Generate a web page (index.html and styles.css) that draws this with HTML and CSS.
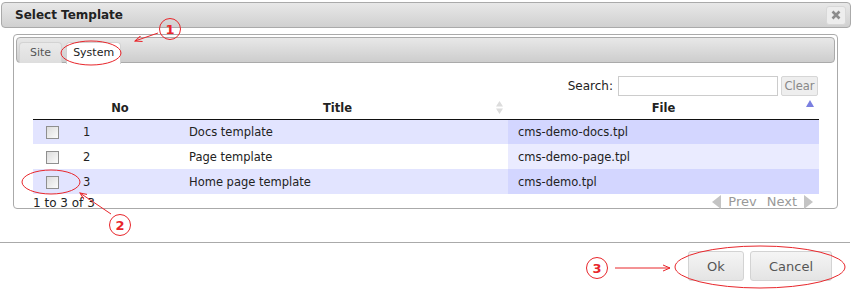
FILE: index.html
```html
<!DOCTYPE html>
<html lang="en">
<head>
    <meta charset="UTF-8">
    <title>Select Template</title>
    <link rel="stylesheet" href="styles.css">
</head>
<body>
    <div class="dialog">
        <div class="titlebar">
            <span class="title">Select Template</span>
            <button class="close-btn" title="Close">
                <svg width="10" height="10" viewBox="0 0 10 10"><path d="M1.5 1.5 L8.5 8.5 M8.5 1.5 L1.5 8.5" stroke="#8c8c8c" stroke-width="2.6"/></svg>
            </button>
        </div>

        <div class="content">
            <div class="tabs">
                <ul class="tab-nav">
                    <li class="tab">Site</li>
                    <li class="tab active">System</li>
                </ul>
                <div class="tab-panel">
                    <div class="search-row">
                        <label>Search:</label>
                        <input type="text" class="search-input">
                        <button class="clear-btn">Clear</button>
                    </div>
                    <table class="grid">
                        <thead>
                            <tr>
                                <th class="col-check"></th>
                                <th class="col-no">No</th>
                                <th class="col-title">Title
                                    <svg class="sort-icon" width="9" height="15" viewBox="0 0 9 15"><path d="M4.5 1 L8 6.5 H1 Z M4.5 14 L8 8.5 H1 Z" fill="#dcdcdc"/></svg>
                                </th>
                                <th class="col-file">File
                                    <svg class="sort-icon up" width="10" height="9" viewBox="0 0 10 9"><path d="M5 1 L9 8 H1 Z" fill="#7a7fe0"/></svg>
                                </th>
                            </tr>
                        </thead>
                        <tbody>
                            <tr class="odd">
                                <td><span class="checkbox"></span></td>
                                <td>1</td>
                                <td>Docs template</td>
                                <td class="sorted">cms-demo-docs.tpl</td>
                            </tr>
                            <tr class="even">
                                <td><span class="checkbox"></span></td>
                                <td>2</td>
                                <td>Page template</td>
                                <td class="sorted">cms-demo-page.tpl</td>
                            </tr>
                            <tr class="odd">
                                <td><span class="checkbox"></span></td>
                                <td>3</td>
                                <td>Home page template</td>
                                <td class="sorted">cms-demo.tpl</td>
                            </tr>
                        </tbody>
                    </table>
                    <div class="grid-footer">
                        <span class="info">1 to 3 of 3</span>
                        <span class="paginate">
                            <svg width="11" height="14" viewBox="0 0 11 14"><path d="M10 0 L1 7 L10 14 Z" fill="#c4c4c4"/></svg>
                            <span class="page-link">Prev</span>
                            <span class="page-link">Next</span>
                            <svg width="11" height="14" viewBox="0 0 11 14"><path d="M1 0 L10 7 L1 14 Z" fill="#c4c4c4"/></svg>
                        </span>
                    </div>
                </div>
            </div>
        </div>

        <div class="button-pane">
            <button class="btn">Ok</button>
            <button class="btn">Cancel</button>
        </div>
    </div>

    <!-- callout marks drawn on top of the screenshot -->
    <svg class="callouts" width="853" height="289" viewBox="0 0 853 289">
        <defs>
            <marker id="arrow" markerWidth="8" markerHeight="8" refX="7" refY="4" orient="auto" markerUnits="userSpaceOnUse">
                <path d="M0 1 L7 4 L0 7" fill="none" stroke="#e8262b" stroke-width="1"/>
            </marker>
        </defs>
        <g fill="none" stroke="#e8262b" stroke-width="1">
            <circle cx="170" cy="29" r="10.5"/>
            <line x1="158" y1="33" x2="135" y2="41" marker-end="url(#arrow)"/>
            <ellipse cx="91" cy="53" rx="30" ry="12"/>

            <circle cx="120" cy="225" r="10.5"/>
            <line x1="111" y1="214" x2="80" y2="193" marker-end="url(#arrow)"/>
            <ellipse cx="51" cy="182" rx="29" ry="12"/>

            <circle cx="597" cy="268" r="10.5"/>
            <line x1="615" y1="268" x2="670" y2="268" marker-end="url(#arrow)"/>
            <ellipse cx="760" cy="267" rx="85" ry="21"/>
        </g>
        <g class="callout-num">
            <text x="170" y="34">1</text>
            <text x="120" y="230">2</text>
            <text x="597" y="273">3</text>
        </g>
    </svg>
</body>
</html>
```

FILE: styles.css
```css
* {
    box-sizing: border-box;
}

body {
    margin: 0;
    background: #fff;
    color: #222;
    font-family: 'DejaVu Sans', Verdana, sans-serif;
    font-size: 11px;
    position: relative;
    width: 853px;
    height: 289px;
    overflow: hidden;
}

.dialog {
    padding: 2px 2px 0 1px;
}

.titlebar {
    height: 26px;
    border: 1px solid #aaa;
    border-radius: 4px;
    background: linear-gradient(#e8e8e8, #d0d0d0);
    display: flex;
    align-items: center;
    justify-content: space-between;
    padding: 0 4px 0 13px;
}

.title {
    font-weight: bold;
    font-size: 12px;
    color: #222;
}

.close-btn {
    width: 20px;
    height: 19px;
    border: 1px solid #d8d8d8;
    border-radius: 3px;
    background: #ededed;
    padding: 0;
    display: flex;
    align-items: center;
    justify-content: center;
}

.content {
    padding: 6px 13px 0 12px;
}

.tabs {
    border: 1px solid #aaa;
    border-radius: 4px;
    padding: 2px;
    height: 175px;
}

.tab-nav {
    list-style: none;
    margin: 0;
    padding: 4px 2px 0;
    height: 26px;
    border: 1px solid #aaa;
    border-radius: 4px;
    background: linear-gradient(#e8e8e8, #cdcdcd);
    display: flex;
    gap: 4px;
}

.tab {
    height: 21px;
    padding: 3px 10px 0;
    border: 1px solid #d3d3d3;
    border-bottom: 0;
    border-radius: 4px 4px 0 0;
    background: linear-gradient(#eaeaea, #dedede);
    color: #555;
    font-size: 11px;
}

.tab.active {
    background: #fff;
    color: #222;
    height: 22px;
    margin-bottom: -1px;
    padding: 3px 6px 0;
}

.tab-panel {
    padding: 13px 17px 0 17px;
}

.search-row {
    display: flex;
    justify-content: flex-end;
    align-items: center;
    gap: 4px;
    height: 20px;
    font-size: 12px;
}

.search-row label {
    margin-right: 1px;
}

.search-input {
    width: 160px;
    height: 20px;
    border: 1px solid #ccc;
    padding: 0;
}

.clear-btn {
    height: 20px;
    width: 37px;
    padding: 0;
    margin-left: -1px;
    border: 1px solid #d6d6d6;
    border-radius: 2px;
    background: #eee;
    color: #888;
    font-family: inherit;
    font-size: 11.5px;
}

.grid {
    width: 786px;
    border-collapse: collapse;
    margin-top: 1px;
}

.grid th {
    height: 22px;
    font-weight: bold;
    font-size: 11.5px;
    color: #222;
    border-bottom: 1px solid #111;
    position: relative;
    padding: 0;
}

.grid td {
    height: 25px;
    padding: 0;
    font-size: 11.5px;
    color: #222;
}

.col-check { width: 40px; }
.col-no { width: 94px; text-align: center; }
.col-title { width: 341px; }
.col-file { width: 311px; }

.grid td:first-child { text-align: center; }
.grid td:nth-child(2) { padding-left: 10px; }
.grid td:nth-child(3) { padding-left: 22px; }
.grid td:nth-child(4) { padding-left: 10px; }

.sort-icon {
    position: absolute;
    right: 4px;
    top: 3px;
}

.sort-icon.up {
    right: 4px;
    top: 2px;
}

.odd { background: #e2e4ff; }
.even { background: #fff; }
.odd .sorted { background: #d3d6ff; }
.even .sorted { background: #eaebff; }

.checkbox {
    display: inline-block;
    width: 13px;
    height: 13px;
    border: 1px solid #8f8f8f;
    background: linear-gradient(135deg, #dcdcdc, #fbfbfb);
    vertical-align: middle;
    margin-left: -1px;
}

.grid-footer {
    display: flex;
    justify-content: space-between;
    align-items: center;
    height: 17px;
    font-size: 12px;
}

.info {
    color: #222;
}

.paginate {
    display: flex;
    align-items: center;
    gap: 6px;
    color: #999;
    padding-right: 4px;
    margin-top: -2px;
}

.page-link {
    font-size: 13px;
}

.page-link + .page-link {
    margin-left: 4px;
}

.button-pane {
    margin-top: 33px;
    border-top: 1px solid #aaa;
    margin-right: 1px;
    margin-left: -1px;
    padding: 8px 18px 0 0;
    display: flex;
    justify-content: flex-end;
    gap: 6px;
}

.btn {
    height: 30px;
    border: 1px solid #d3d3d3;
    border-radius: 3px;
    background: linear-gradient(#f5f5f5, #e4e4e4);
    color: #555;
    font-family: inherit;
    font-size: 13px;
    padding: 0 15px;
}

.btn:first-child { width: 56px; }
.btn:last-child { width: 82px; }

.callouts {
    position: absolute;
    left: 0;
    top: 0;
    pointer-events: none;
}

.callout-num text {
    fill: #e8262b;
    font-family: 'DejaVu Sans', sans-serif;
    font-weight: bold;
    font-size: 13px;
    text-anchor: middle;
}
```
